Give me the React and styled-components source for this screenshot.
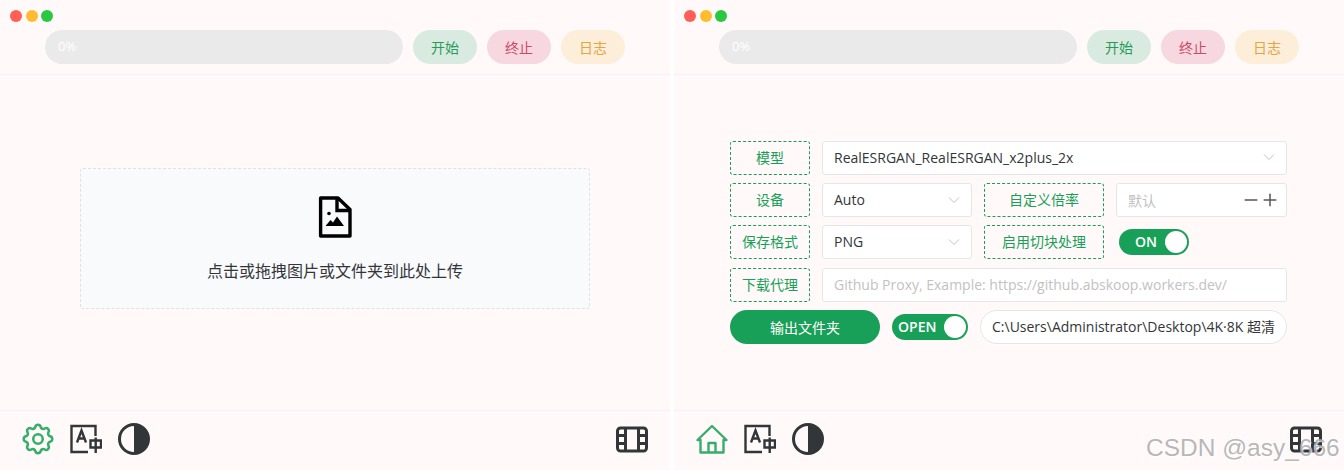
import React from "react";
import styled, { createGlobalStyle } from "styled-components";
import { Minus, Plus } from "lucide-react";
import { TbSettings } from "react-icons/tb";

const GREEN = "#18a058";
const FONT = `"Open Sans", "Noto Sans CJK SC", sans-serif`;

const Global = createGlobalStyle`
  html, body { margin: 0; padding: 0; background: #fff; }
  body { font-family: ${FONT}; font-size: 14px; color: #333639; }
  * { box-sizing: border-box; }
`;

const S = {};

S.Page = styled.div`
  position: relative;
  display: grid;
  grid-template-columns: 670px 670px;
  column-gap: 4px;
  width: 1344px;
  height: 470px;
  overflow: hidden;
`;

S.Panel = styled.section`
  display: flex;
  flex-direction: column;
  height: 470px;
  background: #fffaf9;
`;

S.Header = styled.header`
  height: 75px;
  padding: 10px 0 0 10px;
  border-bottom: 1px solid #f4eff8;
`;

S.Dots = styled.div`
  display: flex;
  height: 12px;
  margin-bottom: 8px;
`;

S.Dot = styled.span`
  width: 12px;
  height: 12px;
  margin-right: ${p => p.$gap}px;
  border-radius: 50%;
  background: ${p => p.$color};
`;

S.Bar = styled.div`
  display: flex;
  align-items: center;
  gap: 10px;
  padding-left: 35px;
`;

S.Progress = styled.div`
  width: 358px;
  height: 34px;
  padding-left: 13px;
  border-radius: 17px;
  background: #eaeaea;
  color: #fff;
  font-size: 13px;
  line-height: 33px;
`;

S.Pill = styled.button`
  width: 64px;
  height: 34px;
  padding: 0;
  border: 0;
  border-radius: 17px;
  background: ${p => p.$bg};
  color: ${p => p.$color};
  font: 14px ${FONT};
`;

S.Main = styled.main`
  flex: 1;
  display: flex;
  align-items: center;
  justify-content: center;
`;

S.Drop = styled.div`
  display: flex;
  flex-direction: column;
  align-items: center;
  width: 510px;
  height: 141px;
  margin-bottom: 8px;
  padding-top: 27px;
  border: 1px dashed #dde2e8;
  border-radius: 3px;
  background: #f9fafc;
  color: #333639;
  font-size: 16px;
  line-height: 24px;
`;

S.DropText = styled.div`
  margin-top: 21px;
`;

S.Form = styled.div`
  display: flex;
  flex-direction: column;
  gap: 8.25px;
  width: 558px;
  padding: 0 1px 0.5px 0;
`;

S.Row = styled.div`
  display: flex;
  align-items: center;
  gap: 12px;
  height: 34px;
`;

S.Label = styled.div`
  flex: none;
  width: ${p => p.$width || 80}px;
  height: 34px;
  border: 1px dashed ${GREEN};
  border-radius: 3px;
  color: ${GREEN};
  line-height: 32px;
  text-align: center;
`;

S.Select = styled.div`
  display: flex;
  align-items: center;
  justify-content: space-between;
  flex: ${p => (p.$width ? "none" : 1)};
  width: ${p => (p.$width ? `${p.$width}px` : "auto")};
  height: 34px;
  padding: 0 11px 1px;
  border: 1px solid #e6e6e6;
  border-radius: 3px;
  background: #fff;
  color: #333639;
`;

S.Input = styled.input`
  flex: 1;
  min-width: 0;
  height: 34px;
  padding: 0 11px ${p => (p.$round ? "1px" : 0)};
  border: 1px solid #e6e6e6;
  border-radius: ${p => (p.$round ? "17px" : "3px")};
  outline: 0;
  background: #fff;
  color: #333639;
  font: 14px ${FONT};

  &::placeholder {
    color: #c2c2c2;
    opacity: 1;
  }
`;

S.Number = styled.div`
  display: flex;
  align-items: center;
  justify-content: space-between;
  flex: 1;
  height: 34px;
  padding: 0 6px 1px 11px;
  border: 1px solid #e6e6e6;
  border-radius: 3px;
  background: #fff;
  color: #c2c2c2;
`;

S.Steppers = styled.div`
  display: flex;
  color: #555;

  svg + svg {
    margin-left: -1px;
  }
`;

S.Toggle = styled.div`
  display: flex;
  align-items: center;
  justify-content: space-between;
  flex: none;
  width: ${p => p.$width}px;
  height: 26px;
  margin-left: ${p => p.$offset || 0}px;
  padding: 0 2px 1px ${p => p.$inset}px;
  border-radius: 13px;
  background: ${GREEN};
  color: #fff;
  font-weight: 600;
`;

S.Knob = styled.span`
  width: 22px;
  height: 22px;
  margin-top: 1px;
  border-radius: 50%;
  background: #fff;
`;

S.OutputButton = styled.button`
  flex: none;
  width: 150px;
  height: 34px;
  padding: 0;
  border: 0;
  border-radius: 17px;
  background: ${GREEN};
  color: #fff;
  font: 14px ${FONT};
`;

S.Footer = styled.footer`
  display: flex;
  align-items: flex-start;
  justify-content: space-between;
  height: 60px;
  padding: 12px 22px 0;
  border-top: 1px solid #f4eff8;
`;

S.Tools = styled.div`
  display: flex;
  gap: 16px;
`;

S.Icon = styled.svg`
  display: block;
  width: 32px;
  height: 32px;
  fill: none;
  color: ${p => p.$color || "#333639"};
  stroke: currentColor;
`;

S.Gear = styled(TbSettings)`
  display: block;
  margin: -3px;
  color: #36ad6a;
`;

S.Watermark = styled.div`
  position: absolute;
  left: 1146px;
  top: 433px;
  color: rgba(165, 165, 165, 0.8);
  font: 24.5px/30px "Liberation Sans", sans-serif;
  text-shadow: 1px 1px 1px rgba(255, 255, 255, 0.8);
  white-space: nowrap;
`;

const HomeIcon = () => (
  <S.Icon viewBox="0 0 32 32" $color="#36ad6a" strokeWidth="2.4" strokeLinejoin="round">
    <path d="M1.5 17 16 3 30.5 17H27.5V29.5H4.5V17Z" />
    <path d="M12.5 29.5V20H19.5V29.5" />
  </S.Icon>
);

const LanguageIcon = () => (
  <S.Icon viewBox="0 0 32 32" strokeWidth="2.4">
    <path d="M18 29H1.5V3H25.5V13" />
    <path d="M7 19.5 11.5 7.5 16 19.5M8.4 15.5H14.6" />
    <path d="M20.5 17.5H31V24.5H20.5ZM25.7 14.5V30" />
  </S.Icon>
);

const ContrastIcon = () => (
  <S.Icon viewBox="0 0 32 32" strokeWidth="3">
    <circle cx="16" cy="16" r="14.5" />
    <path d="M16 1.5A14.5 14.5 0 0 1 16 30.5Z" fill="currentColor" stroke="none" />
  </S.Icon>
);

const FilmIcon = () => (
  <S.Icon viewBox="0 0 32 32" strokeWidth="3">
    <rect x="1.5" y="5" width="29" height="23" rx="3" />
    <path d="M9.5 5V28M22.5 5V28M1.5 12.5H9.5M1.5 20.5H9.5M22.5 12.5H30.5M22.5 20.5H30.5" />
  </S.Icon>
);

const FileImageIcon = () => (
  <svg width="34" height="42" viewBox="0 0 34 42" fill="none" stroke="#000" strokeWidth="3.4">
    <path d="M2.6 2H20L32 13.5V40H2.6Z" strokeLinejoin="round" />
    <path d="M19 2V14.5H32" />
    <circle cx="11" cy="17.5" r="1.8" fill="#000" stroke="none" />
    <path d="M7.5 30 12.5 24 15 26.5 19 20.5 26 30Z" fill="#000" stroke="none" />
  </svg>
);

const Chevron = ({ color = "#c2c2c2" }) => (
  <svg width="12" height="12" viewBox="0 0 12 12" fill="none" stroke={color} strokeWidth="1">
    <path d="M1 3.5 6 8.5 11 3.5" />
  </svg>
);

const Top = () => (
  <S.Header>
    <S.Dots>
      <S.Dot $color="#ff5f57" $gap={4} />
      <S.Dot $color="#febc2e" $gap={3} />
      <S.Dot $color="#28c840" $gap={0} />
    </S.Dots>
    <S.Bar>
      <S.Progress>0%</S.Progress>
      <S.Pill $bg="#d9ebe0" $color="#2a9a5c">开始</S.Pill>
      <S.Pill $bg="#f7d8e0" $color="#cc4a66">终止</S.Pill>
      <S.Pill $bg="#fdeeda" $color="#e5a540">日志</S.Pill>
    </S.Bar>
  </S.Header>
);

const Bottom = ({ home }) => (
  <S.Footer>
    <S.Tools>
      {home ? <HomeIcon /> : <S.Gear size={38} strokeWidth={1.6} />}
      <LanguageIcon />
      <ContrastIcon />
    </S.Tools>
    <FilmIcon />
  </S.Footer>
);

const App = () => (
  <S.Page>
    <Global />
    <S.Panel>
      <Top />
      <S.Main>
        <S.Drop>
          <FileImageIcon />
          <S.DropText>点击或拖拽图片或文件夹到此处上传</S.DropText>
        </S.Drop>
      </S.Main>
      <Bottom />
    </S.Panel>

    <S.Panel>
      <Top />
      <S.Main>
        <S.Form>
          <S.Row>
            <S.Label>模型</S.Label>
            <S.Select>
              RealESRGAN_RealESRGAN_x2plus_2x
              <Chevron />
            </S.Select>
          </S.Row>
          <S.Row>
            <S.Label>设备</S.Label>
            <S.Select $width={150}>
              Auto
              <Chevron />
            </S.Select>
            <S.Label $width={120}>自定义倍率</S.Label>
            <S.Number>
              默认
              <S.Steppers>
                <Minus size={20} strokeWidth={1.8} />
                <Plus size={20} strokeWidth={1.8} />
              </S.Steppers>
            </S.Number>
          </S.Row>
          <S.Row>
            <S.Label>保存格式</S.Label>
            <S.Select $width={150}>
              PNG
              <Chevron />
            </S.Select>
            <S.Label $width={120}>启用切块处理</S.Label>
            <S.Toggle $width={70} $inset={16} $offset={3}>
              ON
              <S.Knob />
            </S.Toggle>
          </S.Row>
          <S.Row>
            <S.Label>下载代理</S.Label>
            <S.Input placeholder="Github Proxy, Example: https://github.abskoop.workers.dev/" />
          </S.Row>
          <S.Row>
            <S.OutputButton>输出文件夹</S.OutputButton>
            <S.Toggle $width={76} $inset={6}>
              OPEN
              <S.Knob />
            </S.Toggle>
            <S.Input $round readOnly value="C:\Users\Administrator\Desktop\4K·8K 超清" />
          </S.Row>
        </S.Form>
      </S.Main>
      <Bottom home />
    </S.Panel>

    <S.Watermark>CSDN @asy_666</S.Watermark>
  </S.Page>
);

export default App;
